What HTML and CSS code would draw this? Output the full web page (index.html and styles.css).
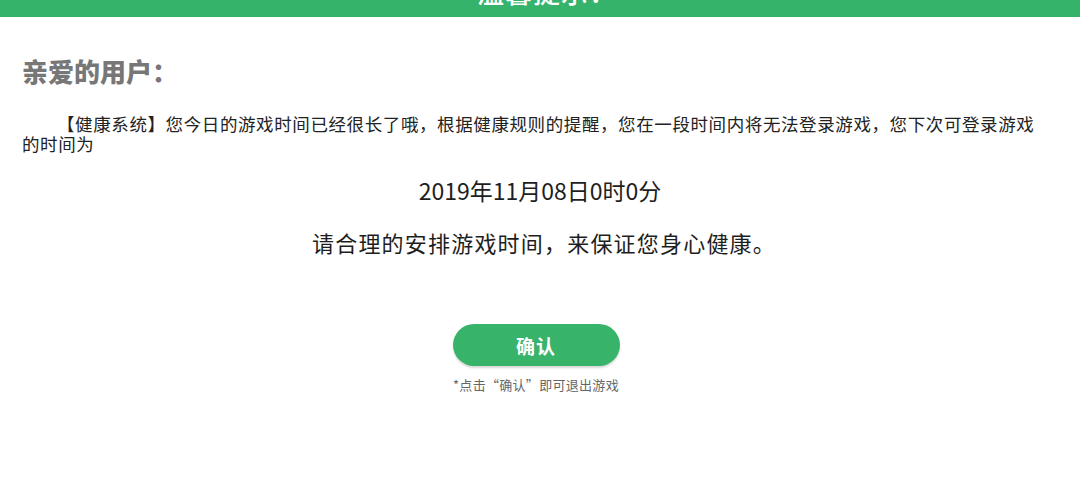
FILE: index.html
```html
<!DOCTYPE html>
<html lang="zh-CN">
<head>
<meta charset="utf-8">
<title>温馨提示</title>
<link rel="stylesheet" href="styles.css">
</head>
<body>
<div class="dialog">
  <header class="topbar"><span class="topbar-title">温馨提示：</span></header>
  <main class="content">
    <h1 class="greeting">亲爱的用户：</h1>
    <p class="message">【健康系统】您今日的游戏时间已经很长了哦，根据健康规则的提醒，您在一段时间内将无法登录游戏，您下次可登录游戏的时间为</p>
    <p class="date">2019年11月08日0时0分</p>
    <p class="advice">请合理的安排游戏时间，来保证您身心健康。</p>
    <div class="actions">
      <button class="confirm" type="button">确认</button>
      <p class="hint">*点击“确认”即可退出游戏</p>
    </div>
  </main>
</div>
</body>
</html>
```

FILE: styles.css
```css
html, body {
  margin: 0;
  padding: 0;
  background: #ffffff;
}
body {
  font-family: "Noto Sans CJK SC", "Noto Sans", sans-serif;
  color: #222222;
  width: 1080px;
  height: 487px;
  overflow: hidden;
}
.dialog {
  display: flex;
  flex-direction: column;
}
.topbar {
  height: 17px;
  background: #36b36a;
  overflow: hidden;
  display: flex;
  justify-content: center;
  align-items: flex-end;
}
.topbar-title {
  color: #ffffff;
  font-size: 27px;
  font-weight: 500;
  line-height: 27px;
  letter-spacing: 1px;
  margin-bottom: 12px;
  margin-left: 14px;
}
.content {
  padding: 0 36px 0 22px;
}
.greeting {
  margin: 36px 0 0 0;
  font-size: 26px;
  line-height: 36px;
  font-weight: 900;
  color: #777777;
  letter-spacing: 0px;
}
.message {
  margin: 25px 0 0 0;
  font-size: 17.5px;
  line-height: 20px;
  text-indent: 2em;
  color: #222222;
  letter-spacing: 0.6px;
}
.date {
  margin: 21px 0 0 0;
  text-align: center;
  font-size: 23px;
  line-height: 30px;
  color: #1e1e1e;
  padding-left: 14px;
}
.advice {
  margin: 22px 0 0 0;
  text-align: center;
  font-size: 22px;
  line-height: 30px;
  color: #1e1e1e;
  padding-left: 22px;
  letter-spacing: 1.2px;
}
.actions {
  display: flex;
  flex-direction: column;
  align-items: center;
  margin-top: 67px;
  padding-left: 6px;
}
.confirm {
  width: 167px;
  height: 42px;
  border: none;
  border-radius: 21px;
  background: #37b36a;
  color: #ffffff;
  font-family: "Noto Sans CJK SC", sans-serif;
  font-size: 19px;
  font-weight: 700;
  box-shadow: 0 2px 2px rgba(0, 0, 0, 0.15);
  padding: 0;
  letter-spacing: 1px;
}
.hint {
  margin: 11px 0 0 0;
  font-size: 13px;
  line-height: 16px;
  color: #666666;
  letter-spacing: 0.3px;
}
```
